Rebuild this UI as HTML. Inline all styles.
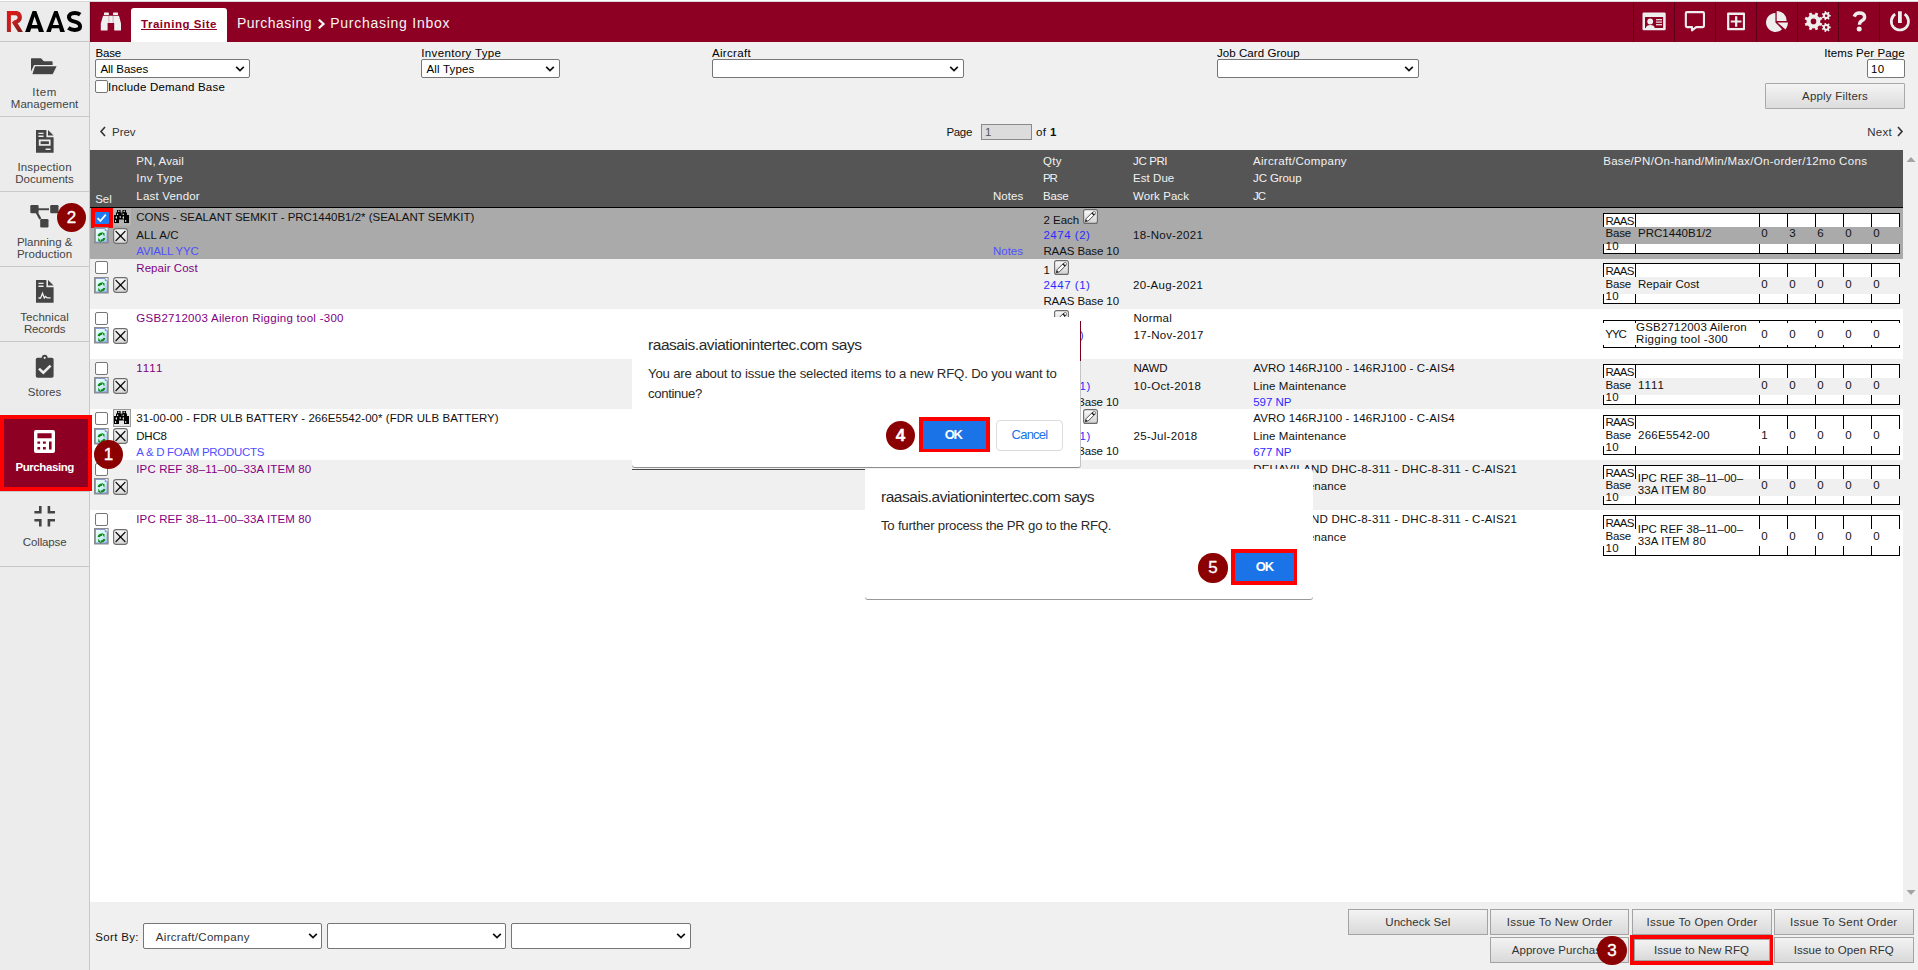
<!DOCTYPE html><html><head><meta charset="utf-8"><style>
html,body{margin:0;padding:0;width:1918px;height:970px;overflow:hidden;background:#f0f0f0;}
body>div{position:absolute;white-space:pre;box-sizing:border-box;}
</style></head><body>
<div style="left:0px;top:0px;width:1918px;height:1px;background:#fdfdfd;"></div>
<div style="left:0px;top:1px;width:1918px;height:1px;background:#d8d8d8;"></div>
<div style="left:0px;top:2px;width:89px;height:39px;background:#ececec;"></div>
<div style="left:0px;top:41px;width:89px;height:1px;background:#c8c8c8;"></div>
<div style="left:90px;top:2px;width:1828px;height:40px;background:#8d0023;"></div>
<div style="left:89px;top:2px;width:1px;height:40px;background:#d0d0d0;"></div>
<div style="left:90px;top:2px;width:1px;height:40px;background:#700016;"></div>
<div style="left:0px;top:42px;width:89px;height:928px;background:#ececec;"></div>
<div style="left:89px;top:42px;width:1px;height:928px;background:#c8c8c8;"></div>
<div style="left:0px;top:116px;width:89px;height:1px;background:#c8c8c8;"></div>
<div style="left:0px;top:191px;width:89px;height:1px;background:#c8c8c8;"></div>
<div style="left:0px;top:266px;width:89px;height:1px;background:#c8c8c8;"></div>
<div style="left:0px;top:341px;width:89px;height:1px;background:#c8c8c8;"></div>
<div style="left:0px;top:491px;width:89px;height:1px;background:#c8c8c8;"></div>
<div style="left:0px;top:566px;width:89px;height:1px;background:#c8c8c8;"></div>
<svg style="position:absolute;left:0;top:0" width="90" height="42" viewBox="0 0 90 42">
<defs><linearGradient id="lg" x1="0" y1="0" x2="0.8" y2="1"><stop offset="0" stop-color="#e01414"/><stop offset="0.55" stop-color="#c42020"/><stop offset="1" stop-color="#861818"/></linearGradient></defs>
<path fill="url(#lg)" d="M6.9 32 V10.9 H15.5 C19.8 10.9 21.9 13.6 21.9 17.2 C21.9 20.3 20.2 22.4 17.6 23.2 L22.9 32 H18.1 L11.9 22.6 L14.3 20.3 C16.5 19.8 17.6 18.8 17.6 17.4 C17.6 16 16.6 15.2 15 15.2 H10.9 V32 Z"/>
<path fill="#000" fill-rule="evenodd" d="M32.6 10.9 H36.3 L44 32 H38.9 L37.8 28.4 H31.2 L30 32 H25.1 Z M34.5 16.4 L37.5 25 H31.9 Z"/>
<path fill="#000" fill-rule="evenodd" d="M54.25 10.9 H57.6 L64.9 32 H60.2 L59.1 28.2 H51.9 L50.8 32 H46.2 Z M55.9 16.7 L59 25 H52.8 Z"/>
<path fill="none" stroke="#000" stroke-width="4" d="M80.2 14.6 C78.7 13.5 76.9 12.9 74.6 12.9 C71.2 12.9 69 14.6 69 17.2 C69 20 71.4 20.9 74.6 21.6 C78.2 22.4 80.1 23.8 80.1 26.6 C80.1 29.5 77.6 30 74.7 30 C72 30 70.1 29.2 68.3 27.9"/>
</svg>
<svg style="position:absolute;left:96px;top:8px" width="30" height="26" viewBox="96 8 30 26"><g fill="#f0f0f0">
<rect x="104" y="12.4" width="4.9" height="2.6" rx="0.6"/><rect x="113" y="12.4" width="5" height="2.6" rx="0.6"/>
<path d="M103.4 15.8 H118.6 Q119 15.8 119.2 16.4 L121 23.6 V30 Q121 30.5 120.5 30.5 H114.7 Q114.2 30.5 114.2 30 V23 H107.6 V30 Q107.6 30.5 107.1 30.5 H101.3 Q100.8 30.5 100.8 30 V23.6 L102.8 16.4 Q103 15.8 103.4 15.8 Z"/>
</g><rect x="108.6" y="16" width="0.7" height="6.8" fill="#c98a98"/><rect x="112.7" y="16" width="0.7" height="6.8" fill="#c98a98"/></svg>
<div style="left:131px;top:8px;width:96px;height:34px;background:#ffffff;border-radius:3px 3px 0 0;"></div>
<div style="left:141.0px;top:14.0px;font-size:11.5px;line-height:20px;color:#8d0023;letter-spacing:0.537px;font-weight:bold;font-family:'Liberation Sans',sans-serif;text-decoration:underline;">Training Site</div>
<div style="left:237.0px;top:13.0px;font-size:14px;line-height:20px;color:#f4f4f4;letter-spacing:0.496px;font-family:'Liberation Sans',sans-serif;">Purchasing</div>
<svg style="position:absolute;left:316px;top:17px" width="11" height="14" viewBox="0 0 11 14"><path d="M2.8 2.6 L7.6 6.9 L2.8 11.2" fill="none" stroke="#f4f4f4" stroke-width="2.1"/></svg>
<div style="left:330.2px;top:13.0px;font-size:14px;line-height:20px;color:#f4f4f4;letter-spacing:0.739px;font-family:'Liberation Sans',sans-serif;">Purchasing Inbox</div>
<div style="left:1633px;top:2px;width:1px;height:40px;background:#5c0015;"></div>
<div style="left:1674px;top:2px;width:1px;height:40px;background:#5c0015;"></div>
<div style="left:1715px;top:2px;width:1px;height:40px;background:#5c0015;"></div>
<div style="left:1756px;top:2px;width:1px;height:40px;background:#5c0015;"></div>
<div style="left:1797px;top:2px;width:1px;height:40px;background:#5c0015;"></div>
<div style="left:1838px;top:2px;width:1px;height:40px;background:#5c0015;"></div>
<div style="left:1879px;top:2px;width:1px;height:40px;background:#5c0015;"></div>
<svg style="position:absolute;left:1633px;top:2px" width="285" height="40" viewBox="1633 2 285 40">
<g fill="#eeeeee" stroke="none">
 <path fill-rule="evenodd" d="M1643.7 12.55 H1664.5 Q1665.7 12.55 1665.7 13.75 V29.1 Q1665.7 30.3 1664.5 30.3 H1643.7 Q1642.5 30.3 1642.5 29.1 V13.75 Q1642.5 12.55 1643.7 12.55 Z M1645 17.1 V28.1 H1663.1 V17.1 Z"/>
 <circle cx="1650.2" cy="21.5" r="2.9"/>
 <path d="M1645.8 28.1 Q1646.4 25 1650.3 25 Q1654.2 25 1654.8 28.1 Z"/>
 <rect x="1656" y="19.1" width="6" height="1.2"/><rect x="1656" y="21.5" width="6" height="1.2"/><rect x="1656" y="24.1" width="6" height="1.2"/>
</g>
<path fill="none" stroke="#eeeeee" stroke-width="2.1" stroke-linejoin="round" d="M1687 12.15 H1702.9 Q1703.95 12.15 1703.95 13.2 V26.1 Q1703.95 27.15 1702.9 27.15 H1696.2 L1692 30.4 V27.15 H1687 Q1685.85 27.15 1685.85 26.1 V13.2 Q1685.85 12.15 1687 12.15 Z"/>
<path fill-rule="evenodd" fill="#eeeeee" d="M1728.1 12.55 H1744 Q1745 12.55 1745 13.55 V29.3 Q1745 30.3 1744 30.3 H1728.1 Q1727.05 30.3 1727.05 29.3 V13.55 Q1727.05 12.55 1728.1 12.55 Z M1729.3 14.9 V28 H1742.9 V14.9 Z"/>
<path fill="#eeeeee" d="M1735 16.3 H1737.3 V20.5 H1741.4 V22.6 H1737.3 V26.7 H1735 V22.6 H1730.8 V20.5 H1735 Z"/>
<g fill="#eeeeee">
 <path d="M1775.4 13.1 V22.5 L1782.05 29.15 A9.4 9.4 0 1 1 1775.4 13.1 Z"/>
 <path d="M1776.7 20.9 V10.9 A10 10 0 0 1 1786.7 20.9 Z"/>
 <path d="M1777.4 22.6 H1788 A10.6 10.6 0 0 1 1785.52 29.41 Z"/>
</g>
<g fill="#eeeeee" fill-rule="evenodd">
 <path d="M1820.39 22.63 L1822.33 23.59 L1821.30 26.09 L1819.24 25.40 L1817.50 27.14 L1818.19 29.20 L1815.69 30.23 L1814.73 28.29 L1812.27 28.29 L1811.31 30.23 L1808.81 29.20 L1809.50 27.14 L1807.76 25.40 L1805.70 26.09 L1804.67 23.59 L1806.61 22.63 L1806.61 20.17 L1804.67 19.21 L1805.70 16.71 L1807.76 17.40 L1809.50 15.66 L1808.81 13.60 L1811.31 12.57 L1812.27 14.51 L1814.73 14.51 L1815.69 12.57 L1818.19 13.60 L1817.50 15.66 L1819.24 17.40 L1821.30 16.71 L1822.33 19.21 L1820.39 20.17 Z M1816.30 21.40 A2.8 2.8 0 1 0 1810.70 21.40 A2.8 2.8 0 1 0 1816.30 21.40 Z"/>
 <path d="M1829.50 14.87 L1830.73 14.92 L1830.73 16.48 L1829.50 16.53 L1828.91 17.76 L1829.64 18.76 L1828.42 19.73 L1827.61 18.80 L1826.28 19.10 L1825.95 20.29 L1824.43 19.95 L1824.66 18.73 L1823.59 17.88 L1822.45 18.37 L1821.78 16.96 L1822.87 16.38 L1822.87 15.02 L1821.78 14.44 L1822.45 13.03 L1823.59 13.52 L1824.66 12.67 L1824.43 11.45 L1825.95 11.11 L1826.28 12.30 L1827.61 12.60 L1828.42 11.67 L1829.64 12.64 L1828.91 13.64 Z M1827.50 15.70 A1.3 1.3 0 1 0 1824.90 15.70 A1.3 1.3 0 1 0 1827.50 15.70 Z"/>
 <path d="M1829.50 26.57 L1830.73 26.62 L1830.73 28.18 L1829.50 28.23 L1828.91 29.46 L1829.64 30.46 L1828.42 31.43 L1827.61 30.50 L1826.28 30.80 L1825.95 31.99 L1824.43 31.65 L1824.66 30.43 L1823.59 29.58 L1822.45 30.07 L1821.78 28.66 L1822.87 28.08 L1822.87 26.72 L1821.78 26.14 L1822.45 24.73 L1823.59 25.22 L1824.66 24.37 L1824.43 23.15 L1825.95 22.81 L1826.28 24.00 L1827.61 24.30 L1828.42 23.37 L1829.64 24.34 L1828.91 25.34 Z M1827.50 27.40 A1.3 1.3 0 1 0 1824.90 27.40 A1.3 1.3 0 1 0 1827.50 27.40 Z"/>
</g>
<rect x="1820.6" y="20.7" width="9" height="1.9" fill="#8d0023"/>
<path fill="none" stroke="#eeeeee" stroke-width="3.4" d="M1854.2 16.6 Q1855.4 13 1859.4 13 Q1864.6 13 1864.6 16.9 Q1864.6 19.3 1861.8 20.8 Q1859.5 22 1859.5 24.7"/>
<circle cx="1859.2" cy="29" r="2.5" fill="#eeeeee"/>
<path fill="none" stroke="#eeeeee" stroke-width="2.7" d="M1895.2 14.2 A8.6 8.6 0 1 0 1904.6 14.2"/>
<rect x="1898" y="11.3" width="3.8" height="11.7" fill="#eeeeee"/>
</svg>
<svg style="position:absolute;left:0;top:42px" width="90" height="530" viewBox="0 42 90 530">
<g fill="#444444">
 <path d="M31.5 58.2 Q31 58.2 31 58.8 V71.5 L33.8 65.7 Q34.3 65 35.2 65 H52.6 V62.1 Q52.6 61.2 51.7 61.2 H43.8 L41 58.2 Z"/>
 <path d="M34.6 65.6 H57.6 L53 74.8 H31.6 Z" stroke="#ececec" stroke-width="1.1"/>
</g>
<g fill="#444444">
 <path fill-rule="evenodd" d="M36 130 H46.4 V137.3 H53.6 V152.8 H36 Z M38.4 132.7 V134 H43.6 V132.7 Z M38.4 135.6 V136.9 H43.6 V135.6 Z M38.8 139.6 V145.8 H50.6 V139.6 Z M45.6 148.6 V150 H50.6 V148.6 Z"/>
 <path d="M48 130 L53.6 135.6 H48 Z"/>
 <rect x="40.6" y="141.3" width="8.3" height="2.8"/>
</g>
<g fill="#444444">
 <rect x="30.3" y="205" width="8.3" height="8.3" rx="1.2"/>
 <rect x="50.2" y="205" width="8.3" height="8.3" rx="1.2"/>
 <rect x="40.2" y="219" width="8.3" height="8.5" rx="1.2"/>
 <rect x="38" y="208.3" width="11" height="1.9"/>
 <path d="M35.5 212.5 L37.8 212 L41.4 218.5 L39.3 219.4 Z"/>
</g>
<g fill="#444444">
 <path fill-rule="evenodd" d="M36 280 H46.4 V287.3 H53.6 V302.8 H36 Z M38.4 282.7 V284 H43.6 V282.7 Z M38.4 285.6 V286.9 H43.6 V285.6 Z"/>
 <path d="M48 280 L53.6 285.6 H48 Z"/>
</g>
<path fill="none" stroke="#eeeeee" stroke-width="1.3" d="M38.4 298 H40.6 L42.5 293.3 L44.3 298 L45.6 296.5 L47.2 297.9 H50.6"/>
<g fill="#444444">
 <rect x="35.8" y="357.8" width="17.8" height="20" rx="1.8"/>
 <circle cx="44.7" cy="357.6" r="2.9"/>
</g>
<circle cx="44.7" cy="357.8" r="1.1" fill="#eeeeee"/>
<path fill="none" stroke="#eeeeee" stroke-width="2.6" d="M39 368.6 L43.3 372.7 L50.6 365.6"/>
<g fill="#444444">
 <path d="M39 506 H41.6 V513.6 H34.4 V511 H39 Z"/>
 <path d="M47.6 506 H50.2 V511 H55 V513.6 H47.6 Z"/>
 <path d="M34.4 519 H41.6 V526.4 H39 V521.6 H34.4 Z"/>
 <path d="M47.6 519 H55 V521.6 H50.2 V526.4 H47.6 Z"/>
</g>
</svg>
<div style="left:32.2px;top:82.0px;font-size:11.5px;line-height:20px;color:#444444;letter-spacing:0.607px;font-family:'Liberation Sans',sans-serif;">Item</div>
<div style="left:10.8px;top:94.0px;font-size:11.5px;line-height:20px;color:#444444;letter-spacing:0.041px;font-family:'Liberation Sans',sans-serif;">Management</div>
<div style="left:17.4px;top:157.0px;font-size:11.5px;line-height:20px;color:#444444;letter-spacing:0.190px;font-family:'Liberation Sans',sans-serif;">Inspection</div>
<div style="left:15.2px;top:169.0px;font-size:11.5px;line-height:20px;color:#444444;letter-spacing:0.065px;font-family:'Liberation Sans',sans-serif;">Documents</div>
<div style="left:16.9px;top:232.0px;font-size:11.5px;line-height:20px;color:#444444;letter-spacing:-0.017px;font-family:'Liberation Sans',sans-serif;">Planning &amp;</div>
<div style="left:16.9px;top:244.0px;font-size:11.5px;line-height:20px;color:#444444;letter-spacing:0.037px;font-family:'Liberation Sans',sans-serif;">Production</div>
<div style="left:20.3px;top:307.0px;font-size:11.5px;line-height:20px;color:#444444;letter-spacing:0.069px;font-family:'Liberation Sans',sans-serif;">Technical</div>
<div style="left:23.9px;top:319.0px;font-size:11.5px;line-height:20px;color:#444444;letter-spacing:-0.189px;font-family:'Liberation Sans',sans-serif;">Records</div>
<div style="left:27.8px;top:382.0px;font-size:11.5px;line-height:20px;color:#444444;letter-spacing:0.058px;font-family:'Liberation Sans',sans-serif;">Stores</div>
<div style="left:22.8px;top:532.0px;font-size:11.5px;line-height:20px;color:#444444;letter-spacing:-0.141px;font-family:'Liberation Sans',sans-serif;">Collapse</div>
<div style="left:0px;top:415px;width:92px;height:76px;background:#8d0023;border:4px solid #ff0000;z-index:3;"></div>
<svg style="position:absolute;left:0;top:415px;z-index:4" width="90" height="76" viewBox="0 415 90 76">
<path fill-rule="evenodd" fill="#ffffff" d="M36 430 H53 Q55 430 55 432 V451 Q55 453 53 453 H36 Q34 453 34 451 V432 Q34 430 36 430 Z M37.4 433.2 V438.3 H51.6 V433.2 Z M37.4 441.4 V443.8 H40.1 V441.4 Z M43 441.4 V443.8 H45.8 V441.4 Z M49 441.4 V449.6 H51.6 V441.4 Z M37.4 447 V449.6 H40.1 V447 Z M43 447 V449.6 H45.8 V447 Z"/>
</svg>
<div style="left:15.4px;top:457.0px;font-size:11.5px;line-height:20px;color:#ffffff;letter-spacing:-0.413px;font-weight:bold;font-family:'Liberation Sans',sans-serif;z-index:4;">Purchasing</div>
<div style="left:95.5px;top:43.0px;font-size:11.5px;line-height:20px;color:#000;letter-spacing:-0.182px;font-family:'Liberation Sans',sans-serif;">Base</div>
<div style="left:95px;top:59px;width:155px;height:19px;background:#ffffff;border:1px solid #767676;border-radius:2px;"></div>
<svg style="position:absolute;left:235px;top:64.5px" width="10" height="8" viewBox="0 0 10 8"><path d="M1.2 1.8 L5 5.6 L8.8 1.8" fill="none" stroke="#111" stroke-width="1.7"/></svg>
<div style="left:100.4px;top:59.0px;font-size:11.5px;line-height:20px;color:#000;letter-spacing:-0.016px;font-family:'Liberation Sans',sans-serif;">All Bases</div>
<div style="left:95px;top:80px;width:13px;height:13px;background:#ffffff;border:1px solid #767676;border-radius:2px;"></div>
<div style="left:108.0px;top:77.0px;font-size:11.5px;line-height:20px;color:#000;letter-spacing:0.203px;font-family:'Liberation Sans',sans-serif;">Include Demand Base</div>
<div style="left:421.3px;top:43.0px;font-size:11.5px;line-height:20px;color:#000;letter-spacing:0.341px;font-family:'Liberation Sans',sans-serif;">Inventory Type</div>
<div style="left:421px;top:59px;width:139px;height:19px;background:#ffffff;border:1px solid #767676;border-radius:2px;"></div>
<svg style="position:absolute;left:545px;top:64.5px" width="10" height="8" viewBox="0 0 10 8"><path d="M1.2 1.8 L5 5.6 L8.8 1.8" fill="none" stroke="#111" stroke-width="1.7"/></svg>
<div style="left:426.5px;top:59.0px;font-size:11.5px;line-height:20px;color:#000;letter-spacing:0.177px;font-family:'Liberation Sans',sans-serif;">All Types</div>
<div style="left:712.0px;top:43.0px;font-size:11.5px;line-height:20px;color:#000;letter-spacing:0.323px;font-family:'Liberation Sans',sans-serif;">Aircraft</div>
<div style="left:712px;top:59px;width:252px;height:19px;background:#ffffff;border:1px solid #767676;border-radius:2px;"></div>
<svg style="position:absolute;left:949px;top:64.5px" width="10" height="8" viewBox="0 0 10 8"><path d="M1.2 1.8 L5 5.6 L8.8 1.8" fill="none" stroke="#111" stroke-width="1.7"/></svg>
<div style="left:1217.0px;top:43.0px;font-size:11.5px;line-height:20px;color:#000;letter-spacing:0.064px;font-family:'Liberation Sans',sans-serif;">Job Card Group</div>
<div style="left:1217px;top:59px;width:202px;height:19px;background:#ffffff;border:1px solid #767676;border-radius:2px;"></div>
<svg style="position:absolute;left:1404px;top:64.5px" width="10" height="8" viewBox="0 0 10 8"><path d="M1.2 1.8 L5 5.6 L8.8 1.8" fill="none" stroke="#111" stroke-width="1.7"/></svg>
<div style="left:1824.2px;top:43.0px;font-size:11.5px;line-height:20px;color:#000;letter-spacing:0.089px;font-family:'Liberation Sans',sans-serif;">Items Per Page</div>
<div style="left:1867px;top:59px;width:38px;height:19px;background:#ffffff;border:1px solid #767676;border-radius:2px;"></div>
<div style="left:1871.0px;top:59.0px;font-size:11.5px;line-height:20px;color:#000;letter-spacing:0.346px;font-family:'Liberation Sans',sans-serif;">10</div>
<div style="left:1765px;top:83px;width:140px;height:26px;background:linear-gradient(#f4f4f4,#dcdcdc);border:1px solid #a9a9a9;border-radius:1px;"></div>
<div style="left:1802.0px;top:86.0px;font-size:11.5px;line-height:20px;color:#333333;letter-spacing:0.210px;font-family:'Liberation Sans',sans-serif;">Apply Filters</div>
<svg style="position:absolute;left:99px;top:126px" width="8" height="11" viewBox="0 0 8 11"><path d="M6 1 L2 5.5 L6 10" fill="none" stroke="#333" stroke-width="1.6"/></svg>
<div style="left:112.0px;top:122.0px;font-size:11.5px;line-height:20px;color:#333333;letter-spacing:-0.034px;font-family:'Liberation Sans',sans-serif;">Prev</div>
<div style="left:946.4px;top:122.0px;font-size:11.5px;line-height:20px;color:#111;letter-spacing:-0.293px;font-family:'Liberation Sans',sans-serif;">Page</div>
<div style="left:981px;top:124px;width:51px;height:16px;background:#dcdcdc;border:1px solid #8a8a8a;"></div>
<div style="left:985.0px;top:122.0px;font-size:11.5px;line-height:20px;color:#555;letter-spacing:0.346px;font-family:'Liberation Sans',sans-serif;">1</div>
<div style="left:1036.0px;top:122.0px;font-size:11.5px;line-height:20px;color:#111;letter-spacing:0.287px;font-family:'Liberation Sans',sans-serif;">of</div>
<div style="left:1050.0px;top:122.0px;font-size:11.5px;line-height:20px;color:#111;letter-spacing:0.751px;font-weight:bold;font-family:'Liberation Sans',sans-serif;">1</div>
<div style="left:1867.3px;top:122.0px;font-size:11.5px;line-height:20px;color:#333333;letter-spacing:0.263px;font-family:'Liberation Sans',sans-serif;">Next</div>
<svg style="position:absolute;left:1896px;top:126px" width="8" height="11" viewBox="0 0 8 11"><path d="M2 1 L6 5.5 L2 10" fill="none" stroke="#333" stroke-width="1.6"/></svg>
<div style="left:90px;top:150px;width:1813px;height:57px;background:#555555;"></div>
<div style="left:90px;top:207px;width:1813px;height:1px;background:#000000;"></div>
<div style="left:95.2px;top:189.0px;font-size:11.5px;line-height:20px;color:#f2f2f2;letter-spacing:-0.049px;font-family:'Liberation Sans',sans-serif;">Sel</div>
<div style="left:136.3px;top:151.0px;font-size:11.5px;line-height:20px;color:#f2f2f2;letter-spacing:0.130px;font-family:'Liberation Sans',sans-serif;">PN, Avail</div>
<div style="left:136.3px;top:168.0px;font-size:11.5px;line-height:20px;color:#f2f2f2;letter-spacing:0.456px;font-family:'Liberation Sans',sans-serif;">Inv Type</div>
<div style="left:136.3px;top:186.0px;font-size:11.5px;line-height:20px;color:#f2f2f2;letter-spacing:0.197px;font-family:'Liberation Sans',sans-serif;">Last Vendor</div>
<div style="left:993.0px;top:186.0px;font-size:11.5px;line-height:20px;color:#f2f2f2;letter-spacing:0.068px;font-family:'Liberation Sans',sans-serif;">Notes</div>
<div style="left:1043.0px;top:151.0px;font-size:11.5px;line-height:20px;color:#f2f2f2;letter-spacing:0.301px;font-family:'Liberation Sans',sans-serif;">Qty</div>
<div style="left:1043.0px;top:168.0px;font-size:11.5px;line-height:20px;color:#f2f2f2;letter-spacing:-1.108px;font-family:'Liberation Sans',sans-serif;">PR</div>
<div style="left:1043.0px;top:186.0px;font-size:11.5px;line-height:20px;color:#f2f2f2;letter-spacing:-0.182px;font-family:'Liberation Sans',sans-serif;">Base</div>
<div style="left:1133.0px;top:151.0px;font-size:11.5px;line-height:20px;color:#f2f2f2;letter-spacing:-0.374px;font-family:'Liberation Sans',sans-serif;">JC PRI</div>
<div style="left:1133.0px;top:168.0px;font-size:11.5px;line-height:20px;color:#f2f2f2;letter-spacing:0.060px;font-family:'Liberation Sans',sans-serif;">Est Due</div>
<div style="left:1133.0px;top:186.0px;font-size:11.5px;line-height:20px;color:#f2f2f2;letter-spacing:0.070px;font-family:'Liberation Sans',sans-serif;">Work Pack</div>
<div style="left:1253.0px;top:151.0px;font-size:11.5px;line-height:20px;color:#f2f2f2;letter-spacing:0.318px;font-family:'Liberation Sans',sans-serif;">Aircraft/Company</div>
<div style="left:1253.0px;top:168.0px;font-size:11.5px;line-height:20px;color:#f2f2f2;letter-spacing:-0.096px;font-family:'Liberation Sans',sans-serif;">JC Group</div>
<div style="left:1253.0px;top:186.0px;font-size:11.5px;line-height:20px;color:#f2f2f2;letter-spacing:-0.916px;font-family:'Liberation Sans',sans-serif;">JC</div>
<div style="left:1603.2px;top:151.0px;font-size:11.5px;line-height:20px;color:#f2f2f2;letter-spacing:0.305px;font-family:'Liberation Sans',sans-serif;">Base/PN/On-hand/Min/Max/On-order/12mo Cons</div>
<div style="left:1903px;top:150px;width:15px;height:752px;background:#f0f0f0;"></div>
<svg style="position:absolute;left:1905px;top:154px" width="12" height="10" viewBox="0 0 12 10"><path d="M1.5 8 L6 3 L10.5 8 Z" fill="#a3a3a3"/></svg>
<svg style="position:absolute;left:1905px;top:888px" width="12" height="10" viewBox="0 0 12 10"><path d="M1.5 2 L6 7 L10.5 2 Z" fill="#a3a3a3"/></svg>
<div style="left:90px;top:208px;width:1813px;height:694px;background:#ffffff;"></div>
<div style="left:90px;top:208px;width:1813px;height:51px;background:#aaaaaa;"></div>
<div style="left:90px;top:259px;width:1813px;height:50px;background:#f0f0f0;"></div>
<div style="left:90px;top:309px;width:1813px;height:50px;background:#ffffff;"></div>
<div style="left:90px;top:359px;width:1813px;height:50px;background:#f0f0f0;"></div>
<div style="left:90px;top:409px;width:1813px;height:51px;background:#ffffff;"></div>
<div style="left:90px;top:460px;width:1813px;height:50px;background:#f0f0f0;"></div>
<div style="left:90px;top:510px;width:1813px;height:50px;background:#ffffff;"></div>
<div style="left:91px;top:208px;width:22px;height:20px;background:#ff0000;"></div>
<div style="left:95px;top:212px;width:13.6px;height:12px;background:#1c7cf4;border-radius:1px;"></div>
<svg style="position:absolute;left:95px;top:212px" width="14" height="12" viewBox="0 0 14 12"><path d="M2.6 6.2 L5.3 9 L10.8 2.6" fill="none" stroke="#fff" stroke-width="1.8"/></svg>
<div style="left:113px;top:208px;width:17.6px;height:17.6px;background:#b4b4b4;"></div>
<svg style="position:absolute;left:114px;top:210px" width="15" height="13" viewBox="0 0 15 13">
<path fill="#000" d="M3 0 H6.6 V2.5 H7.4 V5 H7.6 V2.5 H8.4 V0 H12 V2.5 H13 V5 H15 V13 H10 V9.5 H5 V13 H0 V5 H2 V2.5 H3 Z"/>
<g fill="#fff"><circle cx="4.8" cy="1.3" r="0.7"/><circle cx="10.2" cy="1.3" r="0.7"/><circle cx="3.6" cy="4.3" r="0.7"/><circle cx="9.2" cy="4.3" r="0.7"/>
<ellipse cx="2.3" cy="7.5" rx="0.6" ry="1.2"/><ellipse cx="6.2" cy="7" rx="0.6" ry="1"/><ellipse cx="9.3" cy="7.5" rx="0.6" ry="1.2"/>
<ellipse cx="1.6" cy="11" rx="0.6" ry="1"/><ellipse cx="11.7" cy="11" rx="0.6" ry="1"/></g>
</svg>
<svg style="position:absolute;left:94.1px;top:227px" width="15" height="17" viewBox="0 0 15 17">
<defs><linearGradient id="rg2270" x1="0" y1="0" x2="1" y2="1"><stop offset="0" stop-color="#f0feff"/><stop offset="0.55" stop-color="#d0f4f4"/><stop offset="1" stop-color="#a7bff0"/></linearGradient></defs>
<rect x="0" y="0" width="14.7" height="16.5" fill="#8c8c8c"/>
<rect x="1.1" y="1.1" width="12.5" height="14.3" fill="#7f8fd0"/>
<rect x="1.9" y="1.9" width="10.9" height="12.7" fill="url(#rg2270)"/>
<path d="M10.8 1.1 H13.6 V3.9 Z" fill="#f4f4ff"/><path d="M10.8 1.1 V3.9 H13.6 Z" fill="#8a9bd8"/>
<path d="M4.7 9.2 Q4.9 6.6 8.2 6.6" fill="none" stroke="#0b8a12" stroke-width="2.1"/>
<path d="M7.6 4.7 L10.6 6.4 L10.3 9.6 Z" fill="#0b8a12"/>
<path d="M10.2 11 Q10 13.6 6.7 13.6" fill="none" stroke="#0b8a12" stroke-width="2.1"/>
<path d="M7.2 15.5 L4.2 13.8 L4.5 10.6 Z" fill="#0b8a12"/>
</svg>
<svg style="position:absolute;left:113.3px;top:227.6px" width="15" height="16" viewBox="0 0 15 16">
<defs><linearGradient id="xg" x1="0" y1="0" x2="0" y2="1"><stop offset="0" stop-color="#fbfbfb"/><stop offset="1" stop-color="#d6d6d6"/></linearGradient></defs>
<rect x="0.6" y="0.6" width="13.8" height="14.8" rx="2.6" fill="url(#xg)" stroke="#6e6e6e" stroke-width="1.1"/>
<path d="M2.6 3 L12.4 13 M12.4 3 L2.6 13" stroke="#111" stroke-width="1.2"/>
<circle cx="7.5" cy="8" r="0.9" fill="#000"/>
</svg>
<div style="left:136.3px;top:207.0px;font-size:11.5px;line-height:20px;color:#111111;letter-spacing:-0.013px;font-family:'Liberation Sans',sans-serif;">CONS - SEALANT SEMKIT - PRC1440B1/2* (SEALANT SEMKIT)</div>
<div style="left:136.3px;top:225.0px;font-size:11.5px;line-height:20px;color:#111111;letter-spacing:0.069px;font-family:'Liberation Sans',sans-serif;">ALL A/C</div>
<div style="left:136.3px;top:241.0px;font-size:11.5px;line-height:20px;color:#5050ff;letter-spacing:-0.216px;font-family:'Liberation Sans',sans-serif;">AVIALL YYC</div>
<div style="left:993.0px;top:241.0px;font-size:11.5px;line-height:20px;color:#5050ff;letter-spacing:-0.008px;font-family:'Liberation Sans',sans-serif;">Notes</div>
<div style="left:1043.4px;top:210.0px;font-size:11.5px;line-height:20px;color:#111111;letter-spacing:-0.004px;font-family:'Liberation Sans',sans-serif;">2 Each</div>
<svg style="position:absolute;left:1083.3px;top:208.8px" width="15" height="15" viewBox="0 0 15 15">
<defs><linearGradient id="pg" x1="0" y1="0" x2="0" y2="1"><stop offset="0" stop-color="#fbfbfb"/><stop offset="1" stop-color="#d2d2d2"/></linearGradient></defs>
<rect x="0.6" y="0.6" width="13.8" height="13.8" rx="2" fill="url(#pg)" stroke="#6a6a6a" stroke-width="1.1"/>
<path d="M2.3 12.7 L3.2 9.6 L9.6 3.2 L11.8 5.4 L5.4 11.8 Z" fill="#fff" stroke="#222" stroke-width="0.8" stroke-linejoin="round"/>
<path d="M8.4 4.4 L10.6 6.6 L12 5.2 L9.8 3 Z" fill="#111"/>
<circle cx="11.2" cy="3.8" r="1.4" fill="#fff" stroke="#333" stroke-width="0.6"/>
<path d="M2.3 12.7 L2.9 10.6 L4.4 12.1 Z" fill="#111"/>
</svg>
<div style="left:1043.4px;top:225.0px;font-size:11.5px;line-height:20px;color:#2b2bff;letter-spacing:0.529px;font-family:'Liberation Sans',sans-serif;">2474 (2)</div>
<div style="left:1043.4px;top:241.0px;font-size:11.5px;line-height:20px;color:#111111;letter-spacing:-0.097px;font-family:'Liberation Sans',sans-serif;">RAAS Base 10</div>
<div style="left:1133.0px;top:225.0px;font-size:11.5px;line-height:20px;color:#111111;letter-spacing:0.340px;font-family:'Liberation Sans',sans-serif;">18-Nov-2021</div>
<div style="left:95px;top:261px;width:13px;height:13px;background:#ffffff;border:1px solid #767676;border-radius:2px;"></div>
<svg style="position:absolute;left:94.1px;top:277px" width="15" height="17" viewBox="0 0 15 17">
<defs><linearGradient id="rg2770" x1="0" y1="0" x2="1" y2="1"><stop offset="0" stop-color="#f0feff"/><stop offset="0.55" stop-color="#d0f4f4"/><stop offset="1" stop-color="#a7bff0"/></linearGradient></defs>
<rect x="0" y="0" width="14.7" height="16.5" fill="#8c8c8c"/>
<rect x="1.1" y="1.1" width="12.5" height="14.3" fill="#7f8fd0"/>
<rect x="1.9" y="1.9" width="10.9" height="12.7" fill="url(#rg2770)"/>
<path d="M10.8 1.1 H13.6 V3.9 Z" fill="#f4f4ff"/><path d="M10.8 1.1 V3.9 H13.6 Z" fill="#8a9bd8"/>
<path d="M4.7 9.2 Q4.9 6.6 8.2 6.6" fill="none" stroke="#0b8a12" stroke-width="2.1"/>
<path d="M7.6 4.7 L10.6 6.4 L10.3 9.6 Z" fill="#0b8a12"/>
<path d="M10.2 11 Q10 13.6 6.7 13.6" fill="none" stroke="#0b8a12" stroke-width="2.1"/>
<path d="M7.2 15.5 L4.2 13.8 L4.5 10.6 Z" fill="#0b8a12"/>
</svg>
<svg style="position:absolute;left:113.1px;top:277.2px" width="15" height="16" viewBox="0 0 15 16">
<defs><linearGradient id="xg" x1="0" y1="0" x2="0" y2="1"><stop offset="0" stop-color="#fbfbfb"/><stop offset="1" stop-color="#d6d6d6"/></linearGradient></defs>
<rect x="0.6" y="0.6" width="13.8" height="14.8" rx="2.6" fill="url(#xg)" stroke="#6e6e6e" stroke-width="1.1"/>
<path d="M2.6 3 L12.4 13 M12.4 3 L2.6 13" stroke="#111" stroke-width="1.2"/>
<circle cx="7.5" cy="8" r="0.9" fill="#000"/>
</svg>
<div style="left:136.3px;top:258.0px;font-size:11.5px;line-height:20px;color:#800080;letter-spacing:0.058px;font-family:'Liberation Sans',sans-serif;">Repair Cost</div>
<div style="left:1043.4px;top:260.0px;font-size:11.5px;line-height:20px;color:#111111;letter-spacing:0.346px;font-family:'Liberation Sans',sans-serif;">1</div>
<svg style="position:absolute;left:1054px;top:259.6px" width="15" height="15" viewBox="0 0 15 15">
<defs><linearGradient id="pg" x1="0" y1="0" x2="0" y2="1"><stop offset="0" stop-color="#fbfbfb"/><stop offset="1" stop-color="#d2d2d2"/></linearGradient></defs>
<rect x="0.6" y="0.6" width="13.8" height="13.8" rx="2" fill="url(#pg)" stroke="#6a6a6a" stroke-width="1.1"/>
<path d="M2.3 12.7 L3.2 9.6 L9.6 3.2 L11.8 5.4 L5.4 11.8 Z" fill="#fff" stroke="#222" stroke-width="0.8" stroke-linejoin="round"/>
<path d="M8.4 4.4 L10.6 6.6 L12 5.2 L9.8 3 Z" fill="#111"/>
<circle cx="11.2" cy="3.8" r="1.4" fill="#fff" stroke="#333" stroke-width="0.6"/>
<path d="M2.3 12.7 L2.9 10.6 L4.4 12.1 Z" fill="#111"/>
</svg>
<div style="left:1043.4px;top:275.0px;font-size:11.5px;line-height:20px;color:#2b2bff;letter-spacing:0.529px;font-family:'Liberation Sans',sans-serif;">2447 (1)</div>
<div style="left:1043.4px;top:291.0px;font-size:11.5px;line-height:20px;color:#111111;letter-spacing:-0.097px;font-family:'Liberation Sans',sans-serif;">RAAS Base 10</div>
<div style="left:1133.0px;top:275.0px;font-size:11.5px;line-height:20px;color:#111111;letter-spacing:0.333px;font-family:'Liberation Sans',sans-serif;">20-Aug-2021</div>
<div style="left:95px;top:312px;width:13px;height:13px;background:#ffffff;border:1px solid #767676;border-radius:2px;"></div>
<svg style="position:absolute;left:94.1px;top:327px" width="15" height="17" viewBox="0 0 15 17">
<defs><linearGradient id="rg3270" x1="0" y1="0" x2="1" y2="1"><stop offset="0" stop-color="#f0feff"/><stop offset="0.55" stop-color="#d0f4f4"/><stop offset="1" stop-color="#a7bff0"/></linearGradient></defs>
<rect x="0" y="0" width="14.7" height="16.5" fill="#8c8c8c"/>
<rect x="1.1" y="1.1" width="12.5" height="14.3" fill="#7f8fd0"/>
<rect x="1.9" y="1.9" width="10.9" height="12.7" fill="url(#rg3270)"/>
<path d="M10.8 1.1 H13.6 V3.9 Z" fill="#f4f4ff"/><path d="M10.8 1.1 V3.9 H13.6 Z" fill="#8a9bd8"/>
<path d="M4.7 9.2 Q4.9 6.6 8.2 6.6" fill="none" stroke="#0b8a12" stroke-width="2.1"/>
<path d="M7.6 4.7 L10.6 6.4 L10.3 9.6 Z" fill="#0b8a12"/>
<path d="M10.2 11 Q10 13.6 6.7 13.6" fill="none" stroke="#0b8a12" stroke-width="2.1"/>
<path d="M7.2 15.5 L4.2 13.8 L4.5 10.6 Z" fill="#0b8a12"/>
</svg>
<svg style="position:absolute;left:113.1px;top:328px" width="15" height="16" viewBox="0 0 15 16">
<defs><linearGradient id="xg" x1="0" y1="0" x2="0" y2="1"><stop offset="0" stop-color="#fbfbfb"/><stop offset="1" stop-color="#d6d6d6"/></linearGradient></defs>
<rect x="0.6" y="0.6" width="13.8" height="14.8" rx="2.6" fill="url(#xg)" stroke="#6e6e6e" stroke-width="1.1"/>
<path d="M2.6 3 L12.4 13 M12.4 3 L2.6 13" stroke="#111" stroke-width="1.2"/>
<circle cx="7.5" cy="8" r="0.9" fill="#000"/>
</svg>
<div style="left:136.3px;top:308.0px;font-size:11.5px;line-height:20px;color:#800080;letter-spacing:0.276px;font-family:'Liberation Sans',sans-serif;">GSB2712003 Aileron Rigging tool -300</div>
<svg style="position:absolute;left:1054px;top:309.5px" width="15" height="15" viewBox="0 0 15 15">
<defs><linearGradient id="pg" x1="0" y1="0" x2="0" y2="1"><stop offset="0" stop-color="#fbfbfb"/><stop offset="1" stop-color="#d2d2d2"/></linearGradient></defs>
<rect x="0.6" y="0.6" width="13.8" height="13.8" rx="2" fill="url(#pg)" stroke="#6a6a6a" stroke-width="1.1"/>
<path d="M2.3 12.7 L3.2 9.6 L9.6 3.2 L11.8 5.4 L5.4 11.8 Z" fill="#fff" stroke="#222" stroke-width="0.8" stroke-linejoin="round"/>
<path d="M8.4 4.4 L10.6 6.6 L12 5.2 L9.8 3 Z" fill="#111"/>
<circle cx="11.2" cy="3.8" r="1.4" fill="#fff" stroke="#333" stroke-width="0.6"/>
<path d="M2.3 12.7 L2.9 10.6 L4.4 12.1 Z" fill="#111"/>
</svg>
<div style="left:1043.4px;top:325.0px;font-size:11.5px;line-height:20px;color:#2b2bff;letter-spacing:0.623px;font-family:'Liberation Sans',sans-serif;">593 (1)</div>
<div style="left:1133.5px;top:308.0px;font-size:11.5px;line-height:20px;color:#111111;letter-spacing:0.236px;font-family:'Liberation Sans',sans-serif;">Normal</div>
<div style="left:1133.5px;top:325.0px;font-size:11.5px;line-height:20px;color:#111111;letter-spacing:0.340px;font-family:'Liberation Sans',sans-serif;">17-Nov-2017</div>
<div style="left:95px;top:362px;width:13px;height:13px;background:#ffffff;border:1px solid #767676;border-radius:2px;"></div>
<svg style="position:absolute;left:94.1px;top:377.1px" width="15" height="17" viewBox="0 0 15 17">
<defs><linearGradient id="rg3771" x1="0" y1="0" x2="1" y2="1"><stop offset="0" stop-color="#f0feff"/><stop offset="0.55" stop-color="#d0f4f4"/><stop offset="1" stop-color="#a7bff0"/></linearGradient></defs>
<rect x="0" y="0" width="14.7" height="16.5" fill="#8c8c8c"/>
<rect x="1.1" y="1.1" width="12.5" height="14.3" fill="#7f8fd0"/>
<rect x="1.9" y="1.9" width="10.9" height="12.7" fill="url(#rg3771)"/>
<path d="M10.8 1.1 H13.6 V3.9 Z" fill="#f4f4ff"/><path d="M10.8 1.1 V3.9 H13.6 Z" fill="#8a9bd8"/>
<path d="M4.7 9.2 Q4.9 6.6 8.2 6.6" fill="none" stroke="#0b8a12" stroke-width="2.1"/>
<path d="M7.6 4.7 L10.6 6.4 L10.3 9.6 Z" fill="#0b8a12"/>
<path d="M10.2 11 Q10 13.6 6.7 13.6" fill="none" stroke="#0b8a12" stroke-width="2.1"/>
<path d="M7.2 15.5 L4.2 13.8 L4.5 10.6 Z" fill="#0b8a12"/>
</svg>
<svg style="position:absolute;left:113.1px;top:378.1px" width="15" height="16" viewBox="0 0 15 16">
<defs><linearGradient id="xg" x1="0" y1="0" x2="0" y2="1"><stop offset="0" stop-color="#fbfbfb"/><stop offset="1" stop-color="#d6d6d6"/></linearGradient></defs>
<rect x="0.6" y="0.6" width="13.8" height="14.8" rx="2.6" fill="url(#xg)" stroke="#6e6e6e" stroke-width="1.1"/>
<path d="M2.6 3 L12.4 13 M12.4 3 L2.6 13" stroke="#111" stroke-width="1.2"/>
<circle cx="7.5" cy="8" r="0.9" fill="#000"/>
</svg>
<div style="left:136.3px;top:358.0px;font-size:11.5px;line-height:20px;color:#800080;letter-spacing:0.986px;font-family:'Liberation Sans',sans-serif;">1111</div>
<div style="left:1043.4px;top:376.0px;font-size:11.5px;line-height:20px;color:#2b2bff;letter-spacing:0.584px;font-family:'Liberation Sans',sans-serif;">2448 (1)</div>
<div style="left:1043.4px;top:392.0px;font-size:11.5px;line-height:20px;color:#111111;letter-spacing:-0.142px;font-family:'Liberation Sans',sans-serif;">RAAS Base 10</div>
<div style="left:1133.5px;top:358.0px;font-size:11.5px;line-height:20px;color:#111111;letter-spacing:-0.218px;font-family:'Liberation Sans',sans-serif;">NAWD</div>
<div style="left:1133.5px;top:376.0px;font-size:11.5px;line-height:20px;color:#111111;letter-spacing:0.337px;font-family:'Liberation Sans',sans-serif;">10-Oct-2018</div>
<div style="left:1253.2px;top:358.0px;font-size:11.5px;line-height:20px;color:#111111;letter-spacing:0.128px;font-family:'Liberation Sans',sans-serif;">AVRO 146RJ100 - 146RJ100 - C-AIS4</div>
<div style="left:1253.2px;top:376.0px;font-size:11.5px;line-height:20px;color:#111111;letter-spacing:0.139px;font-family:'Liberation Sans',sans-serif;">Line Maintenance</div>
<div style="left:1253.2px;top:392.0px;font-size:11.5px;line-height:20px;color:#2b2bff;letter-spacing:-0.013px;font-family:'Liberation Sans',sans-serif;">597 NP</div>
<div style="left:95px;top:412px;width:13px;height:13px;background:#ffffff;border:1px solid #767676;border-radius:2px;"></div>
<div style="left:113.2px;top:409.1px;width:17.6px;height:17.6px;background:#e6e6e6;border:1px solid #9a9a9a;"></div>
<svg style="position:absolute;left:114.2px;top:411.1px" width="15" height="13" viewBox="0 0 15 13">
<path fill="#000" d="M3 0 H6.6 V2.5 H7.4 V5 H7.6 V2.5 H8.4 V0 H12 V2.5 H13 V5 H15 V13 H10 V9.5 H5 V13 H0 V5 H2 V2.5 H3 Z"/>
<g fill="#fff"><circle cx="4.8" cy="1.3" r="0.7"/><circle cx="10.2" cy="1.3" r="0.7"/><circle cx="3.6" cy="4.3" r="0.7"/><circle cx="9.2" cy="4.3" r="0.7"/>
<ellipse cx="2.3" cy="7.5" rx="0.6" ry="1.2"/><ellipse cx="6.2" cy="7" rx="0.6" ry="1"/><ellipse cx="9.3" cy="7.5" rx="0.6" ry="1.2"/>
<ellipse cx="1.6" cy="11" rx="0.6" ry="1"/><ellipse cx="11.7" cy="11" rx="0.6" ry="1"/></g>
</svg>
<svg style="position:absolute;left:94.1px;top:427.6px" width="15" height="17" viewBox="0 0 15 17">
<defs><linearGradient id="rg4276" x1="0" y1="0" x2="1" y2="1"><stop offset="0" stop-color="#f0feff"/><stop offset="0.55" stop-color="#d0f4f4"/><stop offset="1" stop-color="#a7bff0"/></linearGradient></defs>
<rect x="0" y="0" width="14.7" height="16.5" fill="#8c8c8c"/>
<rect x="1.1" y="1.1" width="12.5" height="14.3" fill="#7f8fd0"/>
<rect x="1.9" y="1.9" width="10.9" height="12.7" fill="url(#rg4276)"/>
<path d="M10.8 1.1 H13.6 V3.9 Z" fill="#f4f4ff"/><path d="M10.8 1.1 V3.9 H13.6 Z" fill="#8a9bd8"/>
<path d="M4.7 9.2 Q4.9 6.6 8.2 6.6" fill="none" stroke="#0b8a12" stroke-width="2.1"/>
<path d="M7.6 4.7 L10.6 6.4 L10.3 9.6 Z" fill="#0b8a12"/>
<path d="M10.2 11 Q10 13.6 6.7 13.6" fill="none" stroke="#0b8a12" stroke-width="2.1"/>
<path d="M7.2 15.5 L4.2 13.8 L4.5 10.6 Z" fill="#0b8a12"/>
</svg>
<svg style="position:absolute;left:113.1px;top:428.4px" width="15" height="16" viewBox="0 0 15 16">
<defs><linearGradient id="xg" x1="0" y1="0" x2="0" y2="1"><stop offset="0" stop-color="#fbfbfb"/><stop offset="1" stop-color="#d6d6d6"/></linearGradient></defs>
<rect x="0.6" y="0.6" width="13.8" height="14.8" rx="2.6" fill="url(#xg)" stroke="#6e6e6e" stroke-width="1.1"/>
<path d="M2.6 3 L12.4 13 M12.4 3 L2.6 13" stroke="#111" stroke-width="1.2"/>
<circle cx="7.5" cy="8" r="0.9" fill="#000"/>
</svg>
<div style="left:136.3px;top:408.0px;font-size:11.5px;line-height:20px;color:#111111;letter-spacing:0.051px;font-family:'Liberation Sans',sans-serif;">31-00-00 - FDR ULB BATTERY - 266E5542-00* (FDR ULB BATTERY)</div>
<div style="left:136.3px;top:426.0px;font-size:11.5px;line-height:20px;color:#111111;letter-spacing:-0.259px;font-family:'Liberation Sans',sans-serif;">DHC8</div>
<div style="left:136.3px;top:442.0px;font-size:11.5px;line-height:20px;color:#5050ff;letter-spacing:-0.307px;font-family:'Liberation Sans',sans-serif;">A &amp; D FOAM PRODUCTS</div>
<svg style="position:absolute;left:1083.3px;top:409.4px" width="15" height="15" viewBox="0 0 15 15">
<defs><linearGradient id="pg" x1="0" y1="0" x2="0" y2="1"><stop offset="0" stop-color="#fbfbfb"/><stop offset="1" stop-color="#d2d2d2"/></linearGradient></defs>
<rect x="0.6" y="0.6" width="13.8" height="13.8" rx="2" fill="url(#pg)" stroke="#6a6a6a" stroke-width="1.1"/>
<path d="M2.3 12.7 L3.2 9.6 L9.6 3.2 L11.8 5.4 L5.4 11.8 Z" fill="#fff" stroke="#222" stroke-width="0.8" stroke-linejoin="round"/>
<path d="M8.4 4.4 L10.6 6.6 L12 5.2 L9.8 3 Z" fill="#111"/>
<circle cx="11.2" cy="3.8" r="1.4" fill="#fff" stroke="#333" stroke-width="0.6"/>
<path d="M2.3 12.7 L2.9 10.6 L4.4 12.1 Z" fill="#111"/>
</svg>
<div style="left:1043.4px;top:426.0px;font-size:11.5px;line-height:20px;color:#2b2bff;letter-spacing:0.584px;font-family:'Liberation Sans',sans-serif;">2449 (1)</div>
<div style="left:1043.4px;top:441.0px;font-size:11.5px;line-height:20px;color:#111111;letter-spacing:-0.142px;font-family:'Liberation Sans',sans-serif;">RAAS Base 10</div>
<div style="left:1133.5px;top:426.0px;font-size:11.5px;line-height:20px;color:#111111;letter-spacing:0.299px;font-family:'Liberation Sans',sans-serif;">25-Jul-2018</div>
<div style="left:1253.2px;top:408.0px;font-size:11.5px;line-height:20px;color:#111111;letter-spacing:0.128px;font-family:'Liberation Sans',sans-serif;">AVRO 146RJ100 - 146RJ100 - C-AIS4</div>
<div style="left:1253.2px;top:426.0px;font-size:11.5px;line-height:20px;color:#111111;letter-spacing:0.139px;font-family:'Liberation Sans',sans-serif;">Line Maintenance</div>
<div style="left:1253.2px;top:442.0px;font-size:11.5px;line-height:20px;color:#2b2bff;letter-spacing:-0.013px;font-family:'Liberation Sans',sans-serif;">677 NP</div>
<div style="left:95px;top:463px;width:13px;height:13px;background:#ffffff;border:1px solid #767676;border-radius:2px;"></div>
<svg style="position:absolute;left:94.1px;top:478px" width="15" height="17" viewBox="0 0 15 17">
<defs><linearGradient id="rg4780" x1="0" y1="0" x2="1" y2="1"><stop offset="0" stop-color="#f0feff"/><stop offset="0.55" stop-color="#d0f4f4"/><stop offset="1" stop-color="#a7bff0"/></linearGradient></defs>
<rect x="0" y="0" width="14.7" height="16.5" fill="#8c8c8c"/>
<rect x="1.1" y="1.1" width="12.5" height="14.3" fill="#7f8fd0"/>
<rect x="1.9" y="1.9" width="10.9" height="12.7" fill="url(#rg4780)"/>
<path d="M10.8 1.1 H13.6 V3.9 Z" fill="#f4f4ff"/><path d="M10.8 1.1 V3.9 H13.6 Z" fill="#8a9bd8"/>
<path d="M4.7 9.2 Q4.9 6.6 8.2 6.6" fill="none" stroke="#0b8a12" stroke-width="2.1"/>
<path d="M7.6 4.7 L10.6 6.4 L10.3 9.6 Z" fill="#0b8a12"/>
<path d="M10.2 11 Q10 13.6 6.7 13.6" fill="none" stroke="#0b8a12" stroke-width="2.1"/>
<path d="M7.2 15.5 L4.2 13.8 L4.5 10.6 Z" fill="#0b8a12"/>
</svg>
<svg style="position:absolute;left:113.1px;top:478.8px" width="15" height="16" viewBox="0 0 15 16">
<defs><linearGradient id="xg" x1="0" y1="0" x2="0" y2="1"><stop offset="0" stop-color="#fbfbfb"/><stop offset="1" stop-color="#d6d6d6"/></linearGradient></defs>
<rect x="0.6" y="0.6" width="13.8" height="14.8" rx="2.6" fill="url(#xg)" stroke="#6e6e6e" stroke-width="1.1"/>
<path d="M2.6 3 L12.4 13 M12.4 3 L2.6 13" stroke="#111" stroke-width="1.2"/>
<circle cx="7.5" cy="8" r="0.9" fill="#000"/>
</svg>
<div style="left:136.3px;top:459.0px;font-size:11.5px;line-height:20px;color:#800080;letter-spacing:0.116px;font-family:'Liberation Sans',sans-serif;">IPC REF 38–11–00–33A ITEM 80</div>
<div style="left:1253.2px;top:459.0px;font-size:11.5px;line-height:20px;color:#111111;letter-spacing:0.230px;font-family:'Liberation Sans',sans-serif;">DEHAVILAND DHC-8-311 - DHC-8-311 - C-AIS21</div>
<div style="left:1253.2px;top:476.0px;font-size:11.5px;line-height:20px;color:#111111;letter-spacing:0.139px;font-family:'Liberation Sans',sans-serif;">Line Maintenance</div>
<div style="left:95px;top:513px;width:13px;height:13px;background:#ffffff;border:1px solid #767676;border-radius:2px;"></div>
<svg style="position:absolute;left:94.1px;top:528.4px" width="15" height="17" viewBox="0 0 15 17">
<defs><linearGradient id="rg5284" x1="0" y1="0" x2="1" y2="1"><stop offset="0" stop-color="#f0feff"/><stop offset="0.55" stop-color="#d0f4f4"/><stop offset="1" stop-color="#a7bff0"/></linearGradient></defs>
<rect x="0" y="0" width="14.7" height="16.5" fill="#8c8c8c"/>
<rect x="1.1" y="1.1" width="12.5" height="14.3" fill="#7f8fd0"/>
<rect x="1.9" y="1.9" width="10.9" height="12.7" fill="url(#rg5284)"/>
<path d="M10.8 1.1 H13.6 V3.9 Z" fill="#f4f4ff"/><path d="M10.8 1.1 V3.9 H13.6 Z" fill="#8a9bd8"/>
<path d="M4.7 9.2 Q4.9 6.6 8.2 6.6" fill="none" stroke="#0b8a12" stroke-width="2.1"/>
<path d="M7.6 4.7 L10.6 6.4 L10.3 9.6 Z" fill="#0b8a12"/>
<path d="M10.2 11 Q10 13.6 6.7 13.6" fill="none" stroke="#0b8a12" stroke-width="2.1"/>
<path d="M7.2 15.5 L4.2 13.8 L4.5 10.6 Z" fill="#0b8a12"/>
</svg>
<svg style="position:absolute;left:113.1px;top:529px" width="15" height="16" viewBox="0 0 15 16">
<defs><linearGradient id="xg" x1="0" y1="0" x2="0" y2="1"><stop offset="0" stop-color="#fbfbfb"/><stop offset="1" stop-color="#d6d6d6"/></linearGradient></defs>
<rect x="0.6" y="0.6" width="13.8" height="14.8" rx="2.6" fill="url(#xg)" stroke="#6e6e6e" stroke-width="1.1"/>
<path d="M2.6 3 L12.4 13 M12.4 3 L2.6 13" stroke="#111" stroke-width="1.2"/>
<circle cx="7.5" cy="8" r="0.9" fill="#000"/>
</svg>
<div style="left:136.3px;top:509.0px;font-size:11.5px;line-height:20px;color:#800080;letter-spacing:0.116px;font-family:'Liberation Sans',sans-serif;">IPC REF 38–11–00–33A ITEM 80</div>
<div style="left:1253.2px;top:509.0px;font-size:11.5px;line-height:20px;color:#111111;letter-spacing:0.230px;font-family:'Liberation Sans',sans-serif;">DEHAVILAND DHC-8-311 - DHC-8-311 - C-AIS21</div>
<div style="left:1253.2px;top:527.0px;font-size:11.5px;line-height:20px;color:#111111;letter-spacing:0.139px;font-family:'Liberation Sans',sans-serif;">Line Maintenance</div>
<div style="left:1603px;top:213px;width:297px;height:40.5px;background:#ffffff;border:1px solid #000;"></div>
<div style="left:1635px;top:213px;width:1px;height:40.5px;background:#000;"></div>
<div style="left:1759px;top:213px;width:1px;height:40.5px;background:#000;"></div>
<div style="left:1787px;top:213px;width:1px;height:40.5px;background:#000;"></div>
<div style="left:1815px;top:213px;width:1px;height:40.5px;background:#000;"></div>
<div style="left:1843px;top:213px;width:1px;height:40.5px;background:#000;"></div>
<div style="left:1871px;top:213px;width:1px;height:40.5px;background:#000;"></div>
<div style="left:1603px;top:227px;width:298px;height:17px;background:#aaaaaa;"></div>
<div style="left:1605.5px;top:211.0px;font-size:11.5px;line-height:20px;color:#111111;letter-spacing:-0.829px;font-family:'Liberation Sans',sans-serif;">RAAS</div>
<div style="left:1605.5px;top:223.0px;font-size:11.5px;line-height:20px;color:#111111;letter-spacing:-0.182px;font-family:'Liberation Sans',sans-serif;">Base</div>
<div style="left:1605.5px;top:236.0px;font-size:11.5px;line-height:20px;color:#111111;letter-spacing:0.346px;font-family:'Liberation Sans',sans-serif;">10</div>
<div style="left:1638.0px;top:223.0px;font-size:11.5px;line-height:20px;color:#111111;letter-spacing:0.016px;font-family:'Liberation Sans',sans-serif;">PRC1440B1/2</div>
<div style="left:1761.3px;top:223.0px;font-size:11.5px;line-height:20px;color:#111111;letter-spacing:0.346px;font-family:'Liberation Sans',sans-serif;">0</div>
<div style="left:1789.3px;top:223.0px;font-size:11.5px;line-height:20px;color:#111111;letter-spacing:0.346px;font-family:'Liberation Sans',sans-serif;">3</div>
<div style="left:1817.3px;top:223.0px;font-size:11.5px;line-height:20px;color:#111111;letter-spacing:0.346px;font-family:'Liberation Sans',sans-serif;">6</div>
<div style="left:1845.3px;top:223.0px;font-size:11.5px;line-height:20px;color:#111111;letter-spacing:0.346px;font-family:'Liberation Sans',sans-serif;">0</div>
<div style="left:1873.3px;top:223.0px;font-size:11.5px;line-height:20px;color:#111111;letter-spacing:0.346px;font-family:'Liberation Sans',sans-serif;">0</div>
<div style="left:1603px;top:263.3px;width:297px;height:40.5px;background:#ffffff;border:1px solid #000;"></div>
<div style="left:1635px;top:263.3px;width:1px;height:40.5px;background:#000;"></div>
<div style="left:1759px;top:263.3px;width:1px;height:40.5px;background:#000;"></div>
<div style="left:1787px;top:263.3px;width:1px;height:40.5px;background:#000;"></div>
<div style="left:1815px;top:263.3px;width:1px;height:40.5px;background:#000;"></div>
<div style="left:1843px;top:263.3px;width:1px;height:40.5px;background:#000;"></div>
<div style="left:1871px;top:263.3px;width:1px;height:40.5px;background:#000;"></div>
<div style="left:1603px;top:277.3px;width:298px;height:17px;background:#f0f0f0;"></div>
<div style="left:1605.5px;top:261.0px;font-size:11.5px;line-height:20px;color:#111111;letter-spacing:-0.829px;font-family:'Liberation Sans',sans-serif;">RAAS</div>
<div style="left:1605.5px;top:274.0px;font-size:11.5px;line-height:20px;color:#111111;letter-spacing:-0.182px;font-family:'Liberation Sans',sans-serif;">Base</div>
<div style="left:1605.5px;top:286.0px;font-size:11.5px;line-height:20px;color:#111111;letter-spacing:0.346px;font-family:'Liberation Sans',sans-serif;">10</div>
<div style="left:1638.0px;top:274.0px;font-size:11.5px;line-height:20px;color:#111111;letter-spacing:0.058px;font-family:'Liberation Sans',sans-serif;">Repair Cost</div>
<div style="left:1761.3px;top:274.0px;font-size:11.5px;line-height:20px;color:#111111;letter-spacing:0.346px;font-family:'Liberation Sans',sans-serif;">0</div>
<div style="left:1789.3px;top:274.0px;font-size:11.5px;line-height:20px;color:#111111;letter-spacing:0.346px;font-family:'Liberation Sans',sans-serif;">0</div>
<div style="left:1817.3px;top:274.0px;font-size:11.5px;line-height:20px;color:#111111;letter-spacing:0.346px;font-family:'Liberation Sans',sans-serif;">0</div>
<div style="left:1845.3px;top:274.0px;font-size:11.5px;line-height:20px;color:#111111;letter-spacing:0.346px;font-family:'Liberation Sans',sans-serif;">0</div>
<div style="left:1873.3px;top:274.0px;font-size:11.5px;line-height:20px;color:#111111;letter-spacing:0.346px;font-family:'Liberation Sans',sans-serif;">0</div>
<div style="left:1603px;top:320px;width:297px;height:27.5px;background:#ffffff;border:1px solid #000;"></div>
<div style="left:1635px;top:320px;width:1px;height:27.5px;background:#000;"></div>
<div style="left:1759px;top:320px;width:1px;height:27.5px;background:#000;"></div>
<div style="left:1787px;top:320px;width:1px;height:27.5px;background:#000;"></div>
<div style="left:1815px;top:320px;width:1px;height:27.5px;background:#000;"></div>
<div style="left:1843px;top:320px;width:1px;height:27.5px;background:#000;"></div>
<div style="left:1871px;top:320px;width:1px;height:27.5px;background:#000;"></div>
<div style="left:1603px;top:323px;width:298px;height:21.5px;background:#ffffff;"></div>
<div style="left:1605.3px;top:324.0px;font-size:11.5px;line-height:20px;color:#111111;letter-spacing:-1.070px;font-family:'Liberation Sans',sans-serif;">YYC</div>
<div style="left:1636.1px;top:317.0px;font-size:11.5px;line-height:20px;color:#111111;letter-spacing:0.183px;font-family:'Liberation Sans',sans-serif;">GSB2712003 Aileron</div>
<div style="left:1636.1px;top:329.0px;font-size:11.5px;line-height:20px;color:#111111;letter-spacing:0.292px;font-family:'Liberation Sans',sans-serif;">Rigging tool -300</div>
<div style="left:1761.3px;top:324.0px;font-size:11.5px;line-height:20px;color:#111111;letter-spacing:0.346px;font-family:'Liberation Sans',sans-serif;">0</div>
<div style="left:1789.3px;top:324.0px;font-size:11.5px;line-height:20px;color:#111111;letter-spacing:0.346px;font-family:'Liberation Sans',sans-serif;">0</div>
<div style="left:1817.3px;top:324.0px;font-size:11.5px;line-height:20px;color:#111111;letter-spacing:0.346px;font-family:'Liberation Sans',sans-serif;">0</div>
<div style="left:1845.3px;top:324.0px;font-size:11.5px;line-height:20px;color:#111111;letter-spacing:0.346px;font-family:'Liberation Sans',sans-serif;">0</div>
<div style="left:1873.3px;top:324.0px;font-size:11.5px;line-height:20px;color:#111111;letter-spacing:0.346px;font-family:'Liberation Sans',sans-serif;">0</div>
<div style="left:1603px;top:364.3px;width:297px;height:40.5px;background:#ffffff;border:1px solid #000;"></div>
<div style="left:1635px;top:364.3px;width:1px;height:40.5px;background:#000;"></div>
<div style="left:1759px;top:364.3px;width:1px;height:40.5px;background:#000;"></div>
<div style="left:1787px;top:364.3px;width:1px;height:40.5px;background:#000;"></div>
<div style="left:1815px;top:364.3px;width:1px;height:40.5px;background:#000;"></div>
<div style="left:1843px;top:364.3px;width:1px;height:40.5px;background:#000;"></div>
<div style="left:1871px;top:364.3px;width:1px;height:40.5px;background:#000;"></div>
<div style="left:1603px;top:378.3px;width:298px;height:17px;background:#f0f0f0;"></div>
<div style="left:1605.5px;top:362.0px;font-size:11.5px;line-height:20px;color:#111111;letter-spacing:-0.829px;font-family:'Liberation Sans',sans-serif;">RAAS</div>
<div style="left:1605.5px;top:375.0px;font-size:11.5px;line-height:20px;color:#111111;letter-spacing:-0.182px;font-family:'Liberation Sans',sans-serif;">Base</div>
<div style="left:1605.5px;top:387.0px;font-size:11.5px;line-height:20px;color:#111111;letter-spacing:0.346px;font-family:'Liberation Sans',sans-serif;">10</div>
<div style="left:1638.0px;top:375.0px;font-size:11.5px;line-height:20px;color:#111111;letter-spacing:0.986px;font-family:'Liberation Sans',sans-serif;">1111</div>
<div style="left:1761.3px;top:375.0px;font-size:11.5px;line-height:20px;color:#111111;letter-spacing:0.346px;font-family:'Liberation Sans',sans-serif;">0</div>
<div style="left:1789.3px;top:375.0px;font-size:11.5px;line-height:20px;color:#111111;letter-spacing:0.346px;font-family:'Liberation Sans',sans-serif;">0</div>
<div style="left:1817.3px;top:375.0px;font-size:11.5px;line-height:20px;color:#111111;letter-spacing:0.346px;font-family:'Liberation Sans',sans-serif;">0</div>
<div style="left:1845.3px;top:375.0px;font-size:11.5px;line-height:20px;color:#111111;letter-spacing:0.346px;font-family:'Liberation Sans',sans-serif;">0</div>
<div style="left:1873.3px;top:375.0px;font-size:11.5px;line-height:20px;color:#111111;letter-spacing:0.346px;font-family:'Liberation Sans',sans-serif;">0</div>
<div style="left:1603px;top:414.5px;width:297px;height:40.5px;background:#ffffff;border:1px solid #000;"></div>
<div style="left:1635px;top:414.5px;width:1px;height:40.5px;background:#000;"></div>
<div style="left:1759px;top:414.5px;width:1px;height:40.5px;background:#000;"></div>
<div style="left:1787px;top:414.5px;width:1px;height:40.5px;background:#000;"></div>
<div style="left:1815px;top:414.5px;width:1px;height:40.5px;background:#000;"></div>
<div style="left:1843px;top:414.5px;width:1px;height:40.5px;background:#000;"></div>
<div style="left:1871px;top:414.5px;width:1px;height:40.5px;background:#000;"></div>
<div style="left:1603px;top:428.5px;width:298px;height:17px;background:#ffffff;"></div>
<div style="left:1605.5px;top:412.0px;font-size:11.5px;line-height:20px;color:#111111;letter-spacing:-0.829px;font-family:'Liberation Sans',sans-serif;">RAAS</div>
<div style="left:1605.5px;top:425.0px;font-size:11.5px;line-height:20px;color:#111111;letter-spacing:-0.182px;font-family:'Liberation Sans',sans-serif;">Base</div>
<div style="left:1605.5px;top:437.0px;font-size:11.5px;line-height:20px;color:#111111;letter-spacing:0.346px;font-family:'Liberation Sans',sans-serif;">10</div>
<div style="left:1638.0px;top:425.0px;font-size:11.5px;line-height:20px;color:#111111;letter-spacing:0.262px;font-family:'Liberation Sans',sans-serif;">266E5542-00</div>
<div style="left:1761.3px;top:425.0px;font-size:11.5px;line-height:20px;color:#111111;letter-spacing:0.346px;font-family:'Liberation Sans',sans-serif;">1</div>
<div style="left:1789.3px;top:425.0px;font-size:11.5px;line-height:20px;color:#111111;letter-spacing:0.346px;font-family:'Liberation Sans',sans-serif;">0</div>
<div style="left:1817.3px;top:425.0px;font-size:11.5px;line-height:20px;color:#111111;letter-spacing:0.346px;font-family:'Liberation Sans',sans-serif;">0</div>
<div style="left:1845.3px;top:425.0px;font-size:11.5px;line-height:20px;color:#111111;letter-spacing:0.346px;font-family:'Liberation Sans',sans-serif;">0</div>
<div style="left:1873.3px;top:425.0px;font-size:11.5px;line-height:20px;color:#111111;letter-spacing:0.346px;font-family:'Liberation Sans',sans-serif;">0</div>
<div style="left:1603px;top:464.9px;width:297px;height:40.5px;background:#ffffff;border:1px solid #000;"></div>
<div style="left:1635px;top:464.9px;width:1px;height:40.5px;background:#000;"></div>
<div style="left:1759px;top:464.9px;width:1px;height:40.5px;background:#000;"></div>
<div style="left:1787px;top:464.9px;width:1px;height:40.5px;background:#000;"></div>
<div style="left:1815px;top:464.9px;width:1px;height:40.5px;background:#000;"></div>
<div style="left:1843px;top:464.9px;width:1px;height:40.5px;background:#000;"></div>
<div style="left:1871px;top:464.9px;width:1px;height:40.5px;background:#000;"></div>
<div style="left:1603px;top:478.9px;width:298px;height:17px;background:#f0f0f0;"></div>
<div style="left:1605.5px;top:463.0px;font-size:11.5px;line-height:20px;color:#111111;letter-spacing:-0.829px;font-family:'Liberation Sans',sans-serif;">RAAS</div>
<div style="left:1605.5px;top:475.0px;font-size:11.5px;line-height:20px;color:#111111;letter-spacing:-0.182px;font-family:'Liberation Sans',sans-serif;">Base</div>
<div style="left:1605.5px;top:487.0px;font-size:11.5px;line-height:20px;color:#111111;letter-spacing:0.346px;font-family:'Liberation Sans',sans-serif;">10</div>
<div style="left:1637.7px;top:468.0px;font-size:11.5px;line-height:20px;color:#111111;letter-spacing:0.008px;font-family:'Liberation Sans',sans-serif;">IPC REF 38–11–00–</div>
<div style="left:1637.7px;top:480.0px;font-size:11.5px;line-height:20px;color:#111111;letter-spacing:0.166px;font-family:'Liberation Sans',sans-serif;">33A ITEM 80</div>
<div style="left:1761.3px;top:475.0px;font-size:11.5px;line-height:20px;color:#111111;letter-spacing:0.346px;font-family:'Liberation Sans',sans-serif;">0</div>
<div style="left:1789.3px;top:475.0px;font-size:11.5px;line-height:20px;color:#111111;letter-spacing:0.346px;font-family:'Liberation Sans',sans-serif;">0</div>
<div style="left:1817.3px;top:475.0px;font-size:11.5px;line-height:20px;color:#111111;letter-spacing:0.346px;font-family:'Liberation Sans',sans-serif;">0</div>
<div style="left:1845.3px;top:475.0px;font-size:11.5px;line-height:20px;color:#111111;letter-spacing:0.346px;font-family:'Liberation Sans',sans-serif;">0</div>
<div style="left:1873.3px;top:475.0px;font-size:11.5px;line-height:20px;color:#111111;letter-spacing:0.346px;font-family:'Liberation Sans',sans-serif;">0</div>
<div style="left:1603px;top:515.3px;width:297px;height:40.5px;background:#ffffff;border:1px solid #000;"></div>
<div style="left:1635px;top:515.3px;width:1px;height:40.5px;background:#000;"></div>
<div style="left:1759px;top:515.3px;width:1px;height:40.5px;background:#000;"></div>
<div style="left:1787px;top:515.3px;width:1px;height:40.5px;background:#000;"></div>
<div style="left:1815px;top:515.3px;width:1px;height:40.5px;background:#000;"></div>
<div style="left:1843px;top:515.3px;width:1px;height:40.5px;background:#000;"></div>
<div style="left:1871px;top:515.3px;width:1px;height:40.5px;background:#000;"></div>
<div style="left:1603px;top:529.3px;width:298px;height:17px;background:#ffffff;"></div>
<div style="left:1605.5px;top:513.0px;font-size:11.5px;line-height:20px;color:#111111;letter-spacing:-0.829px;font-family:'Liberation Sans',sans-serif;">RAAS</div>
<div style="left:1605.5px;top:526.0px;font-size:11.5px;line-height:20px;color:#111111;letter-spacing:-0.182px;font-family:'Liberation Sans',sans-serif;">Base</div>
<div style="left:1605.5px;top:538.0px;font-size:11.5px;line-height:20px;color:#111111;letter-spacing:0.346px;font-family:'Liberation Sans',sans-serif;">10</div>
<div style="left:1637.7px;top:519.0px;font-size:11.5px;line-height:20px;color:#111111;letter-spacing:0.008px;font-family:'Liberation Sans',sans-serif;">IPC REF 38–11–00–</div>
<div style="left:1637.7px;top:531.0px;font-size:11.5px;line-height:20px;color:#111111;letter-spacing:0.166px;font-family:'Liberation Sans',sans-serif;">33A ITEM 80</div>
<div style="left:1761.3px;top:526.0px;font-size:11.5px;line-height:20px;color:#111111;letter-spacing:0.346px;font-family:'Liberation Sans',sans-serif;">0</div>
<div style="left:1789.3px;top:526.0px;font-size:11.5px;line-height:20px;color:#111111;letter-spacing:0.346px;font-family:'Liberation Sans',sans-serif;">0</div>
<div style="left:1817.3px;top:526.0px;font-size:11.5px;line-height:20px;color:#111111;letter-spacing:0.346px;font-family:'Liberation Sans',sans-serif;">0</div>
<div style="left:1845.3px;top:526.0px;font-size:11.5px;line-height:20px;color:#111111;letter-spacing:0.346px;font-family:'Liberation Sans',sans-serif;">0</div>
<div style="left:1873.3px;top:526.0px;font-size:11.5px;line-height:20px;color:#111111;letter-spacing:0.346px;font-family:'Liberation Sans',sans-serif;">0</div>
<div style="left:90px;top:902px;width:1828px;height:68px;background:#f0f0f0;"></div>
<div style="left:95.3px;top:927.0px;font-size:11.5px;line-height:20px;color:#111111;letter-spacing:0.337px;font-family:'Liberation Sans',sans-serif;">Sort By:</div>
<div style="left:143.4px;top:923px;width:178.6px;height:25.6px;background:#ffffff;border:1px solid #767676;border-radius:2px;"></div>
<svg style="position:absolute;left:307.5px;top:931.8px" width="10" height="8" viewBox="0 0 10 8"><path d="M1.2 1.8 L5 5.6 L8.8 1.8" fill="none" stroke="#111" stroke-width="1.7"/></svg>
<div style="left:155.8px;top:927.0px;font-size:11.5px;line-height:20px;color:#333333;letter-spacing:0.318px;font-family:'Liberation Sans',sans-serif;">Aircraft/Company</div>
<div style="left:327.3px;top:923px;width:179.1px;height:25.6px;background:#ffffff;border:1px solid #767676;border-radius:2px;"></div>
<svg style="position:absolute;left:491.9px;top:931.8px" width="10" height="8" viewBox="0 0 10 8"><path d="M1.2 1.8 L5 5.6 L8.8 1.8" fill="none" stroke="#111" stroke-width="1.7"/></svg>
<div style="left:511.3px;top:923px;width:179.4px;height:25.6px;background:#ffffff;border:1px solid #767676;border-radius:2px;"></div>
<svg style="position:absolute;left:676.2px;top:931.8px" width="10" height="8" viewBox="0 0 10 8"><path d="M1.2 1.8 L5 5.6 L8.8 1.8" fill="none" stroke="#111" stroke-width="1.7"/></svg>
<div style="left:1348px;top:909px;width:139.7px;height:25.7px;background:linear-gradient(#f3f3f3,#d9d9d9);border:1px solid #a3a3a3;"></div>
<div style="left:1385.3px;top:912.0px;font-size:11.5px;line-height:20px;color:#333333;letter-spacing:0.042px;font-family:'Liberation Sans',sans-serif;">Uncheck Sel</div>
<div style="left:1490px;top:909px;width:139.3px;height:25.7px;background:linear-gradient(#f3f3f3,#d9d9d9);border:1px solid #a3a3a3;"></div>
<div style="left:1506.7px;top:912.0px;font-size:11.5px;line-height:20px;color:#333333;letter-spacing:0.251px;font-family:'Liberation Sans',sans-serif;">Issue To New Order</div>
<div style="left:1632.3px;top:909px;width:139.3px;height:25.7px;background:linear-gradient(#f3f3f3,#d9d9d9);border:1px solid #a3a3a3;"></div>
<div style="left:1646.5px;top:912.0px;font-size:11.5px;line-height:20px;color:#333333;letter-spacing:0.234px;font-family:'Liberation Sans',sans-serif;">Issue To Open Order</div>
<div style="left:1774px;top:909px;width:139.5px;height:25.7px;background:linear-gradient(#f3f3f3,#d9d9d9);border:1px solid #a3a3a3;"></div>
<div style="left:1790.0px;top:912.0px;font-size:11.5px;line-height:20px;color:#333333;letter-spacing:0.284px;font-family:'Liberation Sans',sans-serif;">Issue To Sent Order</div>
<div style="left:1490px;top:937px;width:139.3px;height:25.7px;background:linear-gradient(#f3f3f3,#d9d9d9);border:1px solid #a3a3a3;"></div>
<div style="left:1511.7px;top:940.0px;font-size:11.5px;line-height:20px;color:#333333;letter-spacing:0.075px;font-family:'Liberation Sans',sans-serif;">Approve Purchase</div>
<div style="left:1630px;top:935px;width:143px;height:30px;background:#ff0000;"></div>
<div style="left:1633.5px;top:938.8px;width:136px;height:22px;background:linear-gradient(#f3f3f3,#d9d9d9);border:1px solid #a3a3a3;"></div>
<div style="left:1654.0px;top:940.0px;font-size:11.5px;line-height:20px;color:#333333;letter-spacing:0.070px;font-family:'Liberation Sans',sans-serif;">Issue to New RFQ</div>
<div style="left:1774px;top:937px;width:139.5px;height:25.7px;background:linear-gradient(#f3f3f3,#d9d9d9);border:1px solid #a3a3a3;"></div>
<div style="left:1793.7px;top:940.0px;font-size:11.5px;line-height:20px;color:#333333;letter-spacing:0.062px;font-family:'Liberation Sans',sans-serif;">Issue to Open RFQ</div>
<div style="left:632px;top:317px;width:448.5px;height:150px;background:#ffffff;border-radius:3px;box-shadow:0 1px 0 rgba(0,0,0,0.4);"></div>
<div style="left:1080px;top:321px;width:1px;height:40px;background:#7a0018;"></div>
<div style="left:1080px;top:361px;width:1px;height:106px;background:#c4c4c4;"></div>
<div style="left:632px;top:469px;width:233px;height:1px;background:#4a4a4a;"></div>
<div style="left:648.0px;top:335.0px;font-size:15.5px;line-height:20px;color:#2a2a2a;letter-spacing:-0.448px;font-family:'Liberation Sans',sans-serif;">raasais.aviationintertec.com says</div>
<div style="left:648.0px;top:364.0px;font-size:13.2px;line-height:20px;color:#2a2a2a;letter-spacing:-0.177px;font-family:'Liberation Sans',sans-serif;">You are about to issue the selected items to a new RFQ. Do you want to</div>
<div style="left:648.0px;top:384.0px;font-size:13.2px;line-height:20px;color:#2a2a2a;letter-spacing:-0.360px;font-family:'Liberation Sans',sans-serif;">continue?</div>
<div style="left:919px;top:417.2px;width:70.7px;height:35.3px;background:#ff0000;"></div>
<div style="left:923px;top:421px;width:62.6px;height:27.75px;background:#1b73e8;"></div>
<div style="left:944.7px;top:425.0px;font-size:13px;line-height:20px;color:#ffffff;letter-spacing:-1.250px;font-weight:bold;font-family:'Liberation Sans',sans-serif;">OK</div>
<div style="left:996px;top:419.5px;width:67px;height:31px;background:#ffffff;border:1px solid #dadce0;border-radius:4px;"></div>
<div style="left:1011.5px;top:425.0px;font-size:13px;line-height:20px;color:#1a73e8;letter-spacing:-0.744px;font-family:'Liberation Sans',sans-serif;">Cancel</div>
<div style="left:865px;top:469px;width:447.6px;height:130px;background:#ffffff;border-radius:3px;box-shadow:0 1px 0 rgba(0,0,0,0.4);"></div>
<div style="left:881.0px;top:487.0px;font-size:15.5px;line-height:20px;color:#2a2a2a;letter-spacing:-0.463px;font-family:'Liberation Sans',sans-serif;">raasais.aviationintertec.com says</div>
<div style="left:881.0px;top:516.0px;font-size:13.2px;line-height:20px;color:#2a2a2a;letter-spacing:-0.235px;font-family:'Liberation Sans',sans-serif;">To further process the PR go to the RFQ.</div>
<div style="left:1231px;top:548.75px;width:66px;height:35.85px;background:#ff0000;"></div>
<div style="left:1235px;top:553px;width:59px;height:28px;background:#1b73e8;"></div>
<div style="left:1255.8px;top:557.0px;font-size:13px;line-height:20px;color:#ffffff;letter-spacing:-1.250px;font-weight:bold;font-family:'Liberation Sans',sans-serif;">OK</div>
<div style="left:56.9px;top:202.9px;width:29.2px;height:29.2px;background:#8b0000;border-radius:50%;z-index:5;"></div>
<div style="left:66.8px;top:208.0px;font-size:17px;line-height:20px;color:#ffffff;letter-spacing:0.000px;font-family:'Liberation Sans',sans-serif;-webkit-text-stroke:0.35px #fff;z-index:6;">2</div>
<div style="left:93.80000000000001px;top:439.79999999999995px;width:29.2px;height:29.2px;background:#8b0000;border-radius:50%;z-index:5;"></div>
<div style="left:103.7px;top:445.0px;font-size:17px;line-height:20px;color:#ffffff;letter-spacing:0.000px;font-family:'Liberation Sans',sans-serif;-webkit-text-stroke:0.35px #fff;z-index:6;">1</div>
<div style="left:1597.4px;top:935.6999999999999px;width:29.2px;height:29.2px;background:#8b0000;border-radius:50%;z-index:5;"></div>
<div style="left:1607.3px;top:941.0px;font-size:17px;line-height:20px;color:#ffffff;letter-spacing:0.000px;font-family:'Liberation Sans',sans-serif;-webkit-text-stroke:0.35px #fff;z-index:6;">3</div>
<div style="left:885.8px;top:420.79999999999995px;width:29.2px;height:29.2px;background:#8b0000;border-radius:50%;z-index:5;"></div>
<div style="left:895.7px;top:426.0px;font-size:17px;line-height:20px;color:#ffffff;letter-spacing:0.000px;font-weight:bold;font-family:'Liberation Sans',sans-serif;-webkit-text-stroke:0.35px #fff;z-index:6;">4</div>
<div style="left:1198.4px;top:553.4px;width:29.2px;height:29.2px;background:#8b0000;border-radius:50%;z-index:5;"></div>
<div style="left:1208.3px;top:558.0px;font-size:17px;line-height:20px;color:#ffffff;letter-spacing:0.000px;font-family:'Liberation Sans',sans-serif;-webkit-text-stroke:0.35px #fff;z-index:6;">5</div>
</body></html>
